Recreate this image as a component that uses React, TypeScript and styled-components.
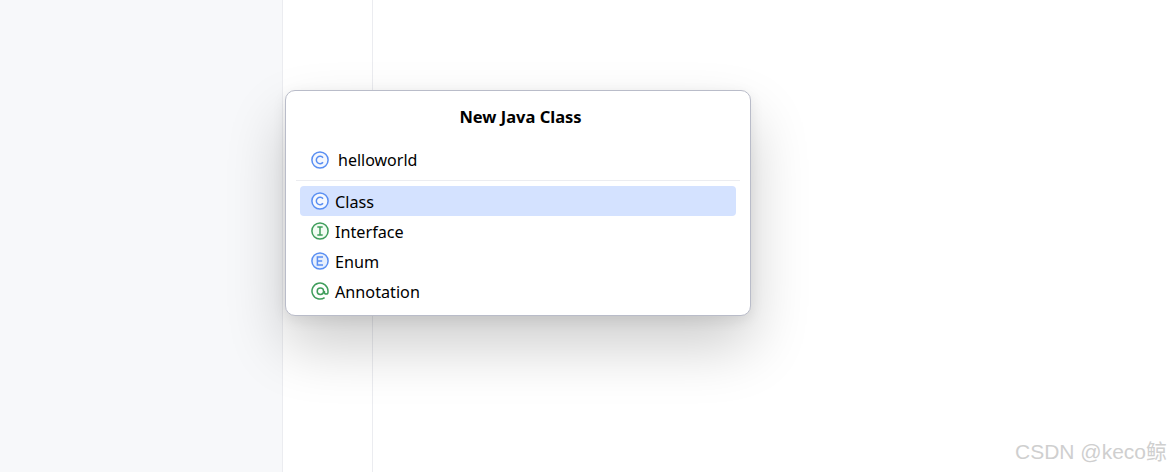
import React from 'react';
import styled, { createGlobalStyle } from 'styled-components';

const GlobalStyle = createGlobalStyle`
    html, body {
        margin: 0;
        padding: 0;
        background: #fff;
        overflow: hidden;
    }
`;

const Page = styled.div`
    position: relative;
    display: flex;
    width: 1170px;
    height: 472px;
    overflow: hidden;
    font-family: "Noto Sans", "Noto Sans CJK SC", sans-serif;
    color: #000;
`;

const Sidebar = styled.aside`
    width: 282px;
    flex: none;
    background: #f7f8fa;
    border-right: 1px solid #ebecf0;
`;

const Gutter = styled.div`
    width: 89px;
    flex: none;
    border-right: 1px solid #ebecf0;
`;

const Dialog = styled.div`
    position: absolute;
    left: 285px;
    top: 90px;
    width: 464px;
    height: 224px;
    background: #fff;
    border: 1px solid #b9bcc9;
    border-radius: 10px;
    box-shadow: 0 30px 60px rgba(0, 0, 0, 0.2), 0 4px 14px rgba(0, 0, 0, 0.08);
    display: flex;
    flex-direction: column;
`;

const Title = styled.h2`
    margin: 0;
    height: 51px;
    padding: 14px 0 0 5px;
    box-sizing: border-box;
    font-size: 16.5px;
    line-height: 23px;
    font-weight: 700;
    text-align: center;
`;

const InputRow = styled.div`
    display: flex;
    align-items: center;
    height: 39px;
    margin: 0 10px;
    padding: 0 0 2px 15px;
    box-sizing: border-box;
    gap: 9px;
    font-size: 16px;
    border-bottom: 1px solid #ebecf0;
`;

const List = styled.ul`
    list-style: none;
    margin: 5px 14px 0;
    padding: 0;
`;

const Item = styled.li<{ $selected?: boolean }>`
    display: flex;
    align-items: center;
    height: 30px;
    padding-left: 11px;
    gap: 6px;
    font-size: 16.2px;
    border-radius: 4px;
    background: ${p => (p.$selected ? '#d4e2ff' : 'transparent')};

    span {
        padding-top: 2px;
    }
`;

const Watermark = styled.div`
    position: absolute;
    right: 3px;
    bottom: 7px;
    font-family: "Liberation Sans", "Noto Sans CJK SC", sans-serif;
    font-size: 21px;
    line-height: 26px;
    color: #cfcfcf;
`;

const BLUE = '#5a8ff2';
const GREEN = '#3f9d5b';

const KindIcon = ({ kind }: { kind: 'C' | 'I' | 'E' | '@' }) => {
    const color = kind === 'C' || kind === 'E' ? BLUE : GREEN;
    return (
        <svg width="18" height="18" viewBox="0 0 18 18" fill="none" stroke={color} strokeWidth="1.5">
            {kind === '@' ? (
                <>
                    <path d="M13.6 15.6A8 8 0 1 1 17 9v1.2a1.8 1.8 0 0 1-3.6 0V9" />
                    <circle cx="9.4" cy="9.2" r="3.2" />
                </>
            ) : (
                <>
                    <circle cx="9" cy="9" r="8.1" fill={kind === 'E' ? '#e7effd' : kind === 'I' ? '#f2fcf3' : '#f5f8fe'} />
                    {kind === 'C' && <path d="M12 6.8A3.7 3.7 0 1 0 12 11.2" />}
                    {kind === 'I' && <path d="M6.3 5h5.4M9 5v8M6.3 13h5.4" />}
                    {kind === 'E' && <path d="M12 5H6.4v8H12M6.4 9h4.8" />}
                </>
            )}
        </svg>
    );
};

const kinds = [
    { kind: 'C', label: 'Class' },
    { kind: 'I', label: 'Interface' },
    { kind: 'E', label: 'Enum' },
    { kind: '@', label: 'Annotation' },
] as const;

const App = () => (
    <Page>
        <GlobalStyle />
        <Sidebar />
        <Gutter />
        <Dialog>
            <Title>New Java Class</Title>
            <InputRow>
                <KindIcon kind="C" />
                <span>helloworld</span>
            </InputRow>
            <List>
                {kinds.map((k, i) => (
                    <Item key={k.label} $selected={i === 0}>
                        <KindIcon kind={k.kind} />
                        <span>{k.label}</span>
                    </Item>
                ))}
            </List>
        </Dialog>
        <Watermark>CSDN @keco鲸</Watermark>
    </Page>
);

export default App;
